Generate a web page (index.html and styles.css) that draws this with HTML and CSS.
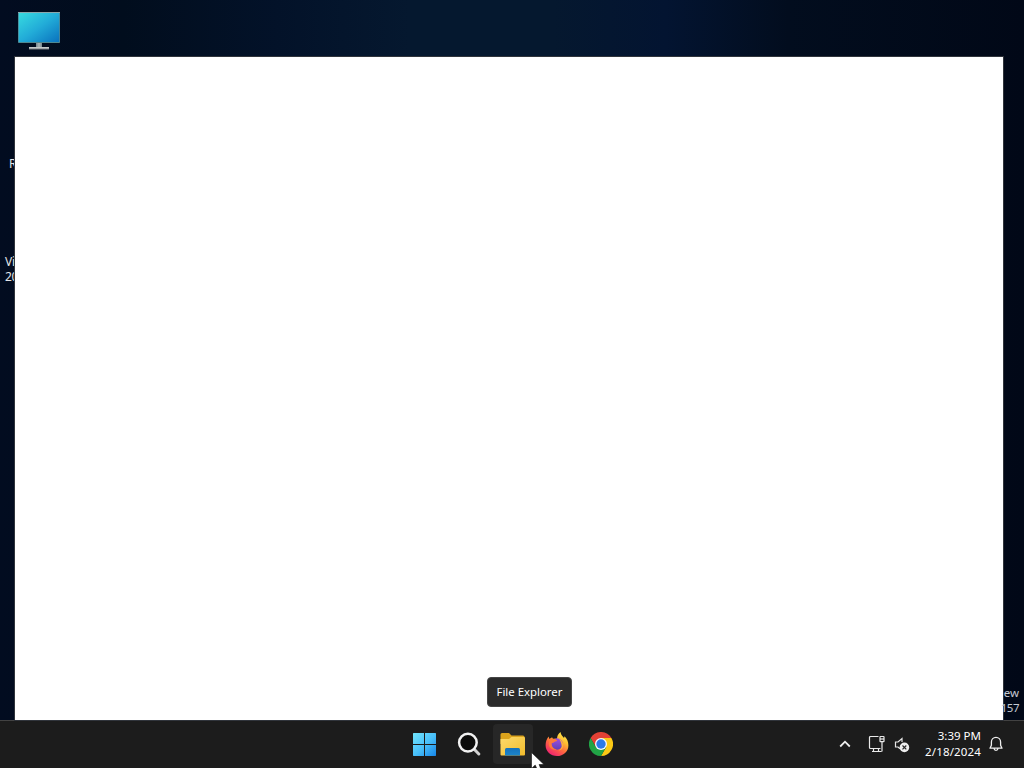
FILE: index.html
```html
<!DOCTYPE html>
<html lang="en">
<head>
<meta charset="utf-8">
<title>Desktop</title>
<link rel="stylesheet" href="styles.css">
</head>
<body>
<div class="screen">
  <main class="desktop">
    <svg class="monitor" width="44" height="40" viewBox="0 0 44 40">
      <defs><linearGradient id="scr" x1="0" y1="0" x2="1" y2="1"><stop offset="0" stop-color="#37dbe0"/><stop offset=".5" stop-color="#22acd8"/><stop offset="1" stop-color="#0a72be"/></linearGradient></defs>
      <rect x="1" y="1" width="42" height="31" rx=".8" fill="#4f8791"/>
      <rect x="1.8" y="2" width="40.4" height="29" fill="url(#scr)"/>
      <path d="M1 1.500h42" stroke="#8aa7ac"/>
      <path d="M19 32h6v4h-6z" fill="#7e8e94"/>
      <path d="M20.500 32h3v4h-3z" fill="#a0acb0"/>
      <path d="M12 36h20v2H12z" fill="#c3c8ca"/><path d="M12 37.500h20v1H12z" fill="#777d82"/>
    </svg>
    <div class="label label-r">Recycle</div>
    <div class="label label-vi">Visual<br>2022</div>
    <div class="window"></div>
    <div class="label watermark"><span>ew</span><span class="build">157</span></div>
  </main>
  <footer class="taskbar">
    <nav class="apps">
      <div class="app">
        <svg class="start" width="24" height="24" viewBox="0 0 24 24">
          <defs><linearGradient id="win" gradientUnits="userSpaceOnUse" x1="0" y1="0" x2="24" y2="24"><stop offset="0" stop-color="#75e8fc"/><stop offset=".55" stop-color="#48bffa"/><stop offset="1" stop-color="#1685e8"/></linearGradient></defs>
          <path fill="url(#win)" d="M1.500 1H12v11H1V1.500zM13 1h10.500l.5.500V12H13zM1 13h11v11H1.500l-.5-.5zM13 13h11v10.500l-.5.500H13z"/>
        </svg>
      </div>
      <div class="app">
        <svg width="24" height="24" viewBox="0 0 24 24">
          <path d="M17 17l4.800 5" stroke="#d2d2d2" stroke-width="3" stroke-linecap="round"/>
          <circle cx="10.900" cy="10.600" r="8.800" fill="#0c0c0b" stroke="#f2f2f2" stroke-width="2.500"/>
        </svg>
      </div>
      <div class="app active">
        <svg width="26" height="24" viewBox="0 0 26 24">
          <defs><linearGradient id="fold" x1="0" y1="0" x2="1" y2="1"><stop offset="0" stop-color="#fbd96c"/><stop offset="1" stop-color="#f3bc2c"/></linearGradient>
          <linearGradient id="pocket" x1="0" y1="0" x2="0" y2="1"><stop offset="0" stop-color="#1471bb"/><stop offset="1" stop-color="#1d85c9"/></linearGradient></defs>
          <path fill="#dba31c" d="M.5 2.500a1.500 1.500 0 0 1 1.500-1.500h7l2.500 2.500H23a1.500 1.500 0 0 1 1.500 1.500v7H.5z"/>
          <path fill="url(#fold)" d="M.5 7h8.500l2.500-2H24a1 1 0 0 1 1 1v16.500a1 1 0 0 1-1 1H1.500a1 1 0 0 1-1-1z"/>
          <path fill="url(#pocket)" d="M5 23.500v-6A1.500 1.500 0 0 1 6.500 16h12a1.500 1.500 0 0 1 1.500 1.500v6z"/>
        </svg>
        <div class="tooltip">File Explorer</div>
      </div>
      <div class="app">
        <svg width="24" height="26" viewBox="0 0 24 26">
          <defs>
            <linearGradient id="ff" x1=".85" y1="0" x2=".2" y2="1"><stop offset="0" stop-color="#fff44f"/><stop offset=".32" stop-color="#ffbd32"/><stop offset=".6" stop-color="#ff6840"/><stop offset="1" stop-color="#ed1978"/></linearGradient>
            <linearGradient id="globe" x1="0" y1="0" x2="0" y2="1"><stop offset="0" stop-color="#a04fe0"/><stop offset="1" stop-color="#6040b8"/></linearGradient>
          </defs>
          <path fill="url(#ff)" d="M15.500 1c.3 3 2.300 4 3.500 6l.6-1.700c2.400 2.500 3.800 5.400 3.800 9.100C23.400 20.500 18.400 25 12 25S.6 20.300.6 14.200c0-3.300 1-6.200 3-8.700l.8 2.600 2.700-1.800.9 1.900c1.500-.4 2.800-.6 4-.3C12 5.200 13.200 2.700 15.500 1z"/>
          <circle cx="12" cy="13" r="5.800" fill="url(#globe)"/>
          <path fill="#ff7a38" d="M4.200 8.300c3-1.400 6.200-1.100 8.200 1.700-2 .1-3 .6-3.500 1.500l-2.300.8c.1 3.600 2 5.900 5.100 5.900-2.500 1.500-7.100-.3-7.800-3.900-.4-2 .8-4.400.3-6z"/>
          <path fill="#ffb23c" d="M14 8c3 1.400 5 4.400 4 7.800-.8 2.600-2.700 3.800-4.600 3.800 3-1.500 3.600-3.600 3.100-5.900-.2-2.200-1.200-3.900-2.500-5.700z"/>
        </svg>
      </div>
      <div class="app">
        <svg width="24" height="24" viewBox="0 0 24 24">
          <path fill="#e34135" d="M12 12L6.800 15 1.600 6A12 12 0 0 1 22.400 6H12z"/>
          <path fill="#fbc915" d="M12 12V6h10.400A12 12 0 0 1 12 24l5.200-9z"/>
          <path fill="#21a446" d="M12 12l5.200 3L12 24A12 12 0 0 1 1.600 6l5.200 9z"/>
          <circle cx="12" cy="12" r="6" fill="#f7f7ff"/><circle cx="12" cy="12" r="4.700" fill="#2b79e8"/>
        </svg>
      </div>
    </nav>
    <section class="tray">
      <svg class="chevron" width="12" height="8" viewBox="0 0 12 8"><path d="M1.200 6.500L6 1.700l4.800 4.800" fill="none" stroke="#eee" stroke-width="1.800"/></svg>
      <svg class="network" width="17" height="18" viewBox="0 0 17 18" fill="none" stroke="#e9e9e9" stroke-width="1.200">
        <path d="M10.500 1.500H2.500q-1 0-1 1v10q0 1 1 1h10M4 16.500h9.500M5.500 13.500v3M10.500 13.500v3M14 7v9.500"/>
        <rect x="12" y="1.500" width="4" height="5.200" rx=".5"/><path d="M12 4h4"/>
      </svg>
      <svg class="volume" width="16" height="16" viewBox="0 0 16 16">
        <path d="M8 5V1.500L4 5H1.500v5H4l2 1.800" fill="none" stroke="#e5e5e5" stroke-width="1.200"/>
        <circle cx="10.400" cy="10.400" r="4.800" fill="#eee"/><path d="M8.500 8.500l3.800 3.800m0-3.800l-3.800 3.800" stroke="#292929" stroke-width="1.200"/>
      </svg>
      <div class="clock"><div class="time">3:39 PM</div><div class="date">2/18/2024</div></div>
      <svg class="bell" width="14" height="16" viewBox="0 0 14 16" fill="none" stroke="#eee" stroke-width="1.300" stroke-linejoin="round"><path d="M1 12.200l1.400-3V6a4.600 4.600 0 0 1 9.200 0v3.200l1.400 3zM5 12.500c.3 2.400 3.700 2.400 4 0"/></svg>
    </section>
  </footer>
  <svg class="cursor" width="14" height="18" viewBox="0 0 14 18"><path d="M.5.5v16l3.700-3.400L6.500 18h3.800l-2.200-5.500H13z" fill="#fff" stroke="#111" stroke-width=".6"/></svg>
</div>
</body>
</html>
```
FILE: styles.css
```css
* { box-sizing: border-box; }
body { margin: 0; font-family: "Noto Sans", "Open Sans", sans-serif; overflow: hidden; }
.screen { position: relative; width: 1024px; height: 768px; display: flex; flex-direction: column; overflow: hidden; }
.desktop {
  position: relative;
  height: 720px;
  background: linear-gradient(90deg, #020c20 0, #010d1d 12%, #031229 27%, #05182f 40%, #05182f 54%, #031431 65%, #020d1e 77%, #010817 100%);
}
.monitor { position: absolute; left: 17px; top: 11px; }
.window { position: absolute; left: 15px; top: 57px; width: 988px; height: 663px; background: #fff; box-shadow: 0 0 0 1px #30343b; }
.label { position: absolute; font-size: 12px; line-height: 15px; color: #e3e5e8; white-space: nowrap; }
.label-r { left: 9px; top: 156px; }
.label-vi { left: 5px; top: 254px; letter-spacing: -.3px; }
.watermark { right: 5px; top: 685px; display: flex; flex-direction: column; align-items: flex-end; color: #c5cad2; font-size: 11.500px; }
.build { letter-spacing: -.5px; }
.taskbar { height: 48px; display: flex; justify-content: space-between; padding: 0 21px 2px 405px; background: #1c1c1c; border-top: 1px solid #424242; }
.apps { display: flex; align-items: center; gap: 4px; }
.app { position: relative; width: 40px; height: 40px; border-radius: 4px; display: flex; align-items: center; justify-content: center; }
.active { background: #272727; }
.app svg { display: block; }
.app .start { margin-right: 2px; }
.tooltip {
  position: absolute;
  left: -6px;
  top: -47px;
  width: 85px;
  height: 30px;
  border: 1px solid #454545;
  border-radius: 4px;
  background: #2b2b2b;
  color: #fff;
  font-size: 11.400px;
  line-height: 28px;
  text-align: center;
  white-space: nowrap;
}
.tray { display: flex; align-items: center; color: #fff; }
.network { margin-left: 17px; }
.volume { margin-left: 9px; margin-top: 2px; }
.clock { width: 58px; margin-left: 13px; font-size: 11.500px; line-height: 16px; text-align: right; white-space: nowrap; }
.date { letter-spacing: .15px; }
.bell { margin-left: 8px; }
.cursor { position: absolute; left: 531px; top: 752px; }
```
